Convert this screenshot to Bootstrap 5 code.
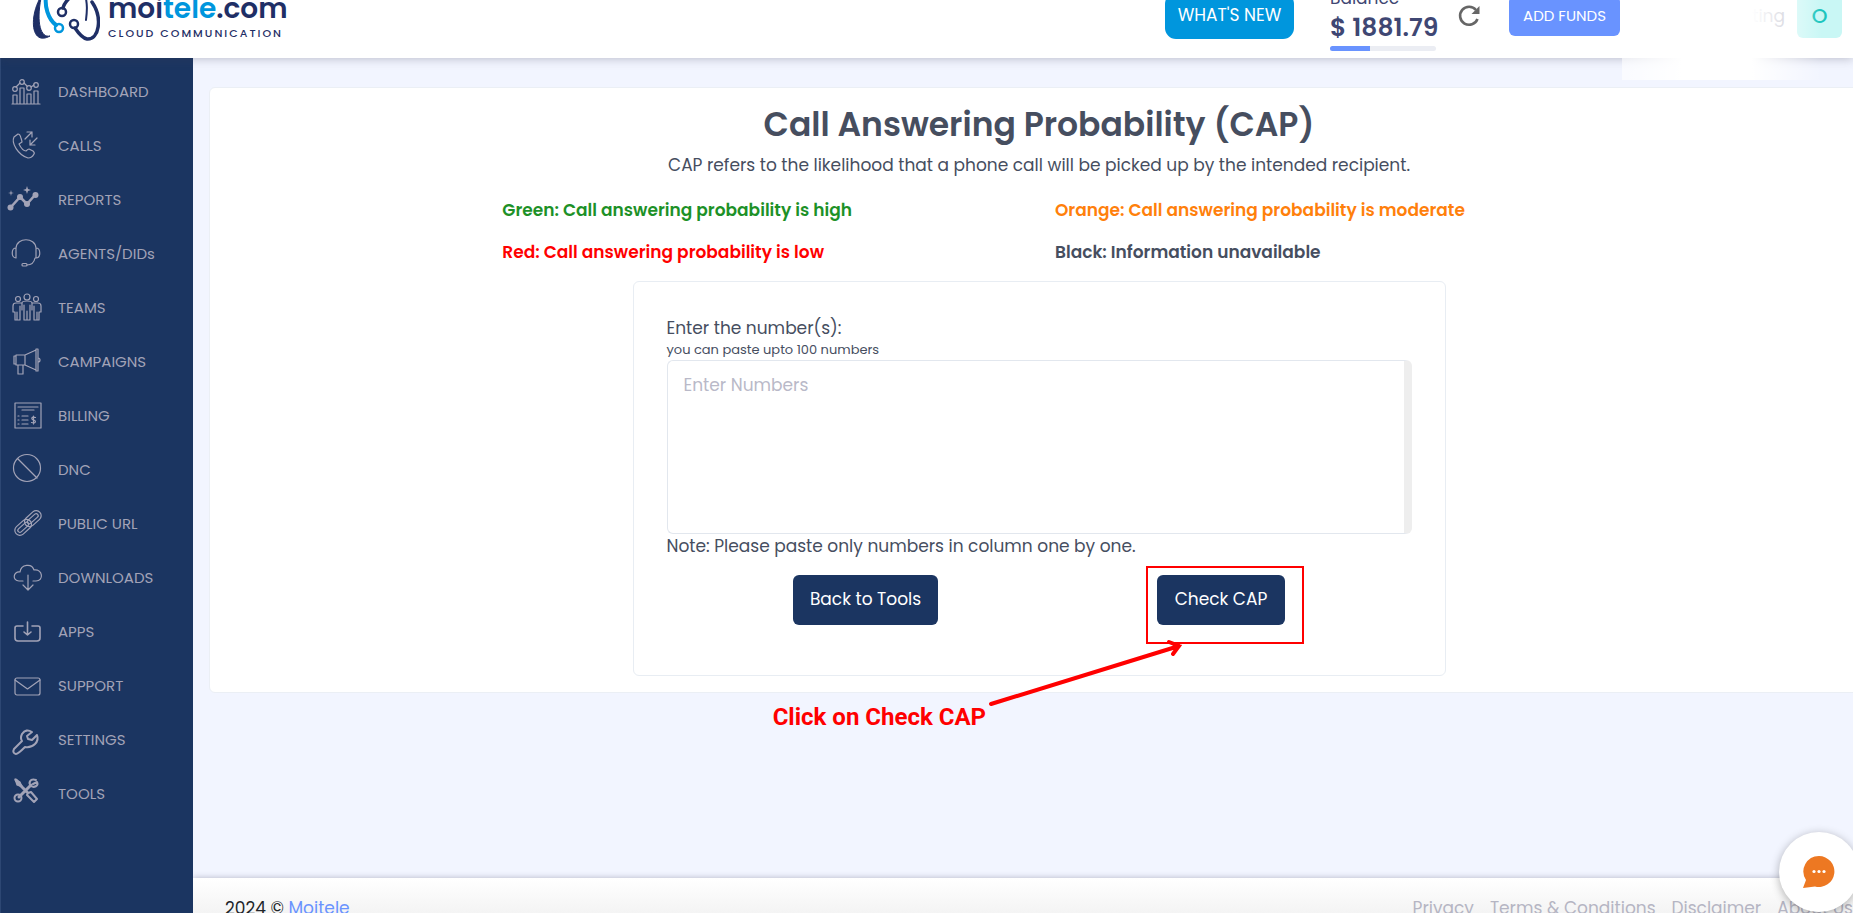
<!DOCTYPE html>
<html lang="en">
<head>
<meta charset="utf-8">
<meta name="viewport" content="width=device-width, initial-scale=1">
<title>Call Answering Probability</title>
<link href="https://cdn.jsdelivr.net/npm/bootstrap@5.3.0/dist/css/bootstrap.min.css" rel="stylesheet">
<style>
  body { font-family: Poppins, Inter, "Open Sans", sans-serif; font-size: 17px; line-height: 24px; color: #464e5f; background: #f2f5ff; }
  a { text-decoration: none; }
  .topbar { height: 58px; background: #fff; box-shadow: 0 0 10px rgba(60,60,80,.35); z-index: 5; }
  .topbar-inner { height: 84px; }
  .brand-link { padding-bottom: 14px; }
  .brand-name { font-size: 28px; line-height: 32px; font-weight: 600; color: #1f2f66; }
  .brand-name span { color: #0096dd; }
  .brand-sub { font-size: 11px; line-height: 16px; font-weight: 500; letter-spacing: 2px; color: #1f2f66; }
  .btn-news { width: 129px; height: 46px; border-radius: 11px; background: #0096dd; color: #fff; font-size: 17px; padding: 0; }
  .btn-funds { width: 111px; height: 40px; border-radius: 6px; background: #6993ff; color: #fff; font-size: 15px; padding: 0; }
  .balance { width: 106px; color: #3f4773; margin: 0 21px 0 36px; padding-top: 5px; }
  .balance .amount { font-size: 25px; line-height: 36px; font-weight: 600; white-space: nowrap; }
  .balance .progress { height: 5px; background: #ebedf3; }
  .balance .progress-bar { background: #6993ff; }
  .btn-refresh { margin-right: 28px; }
  .user-area { width: 233px; padding-right: 11px; }
  .user-haze { left: 2px; width: 200px; height: 80px; top: 0; z-index: 1; background: linear-gradient(90deg, rgba(255,255,255,.6), #fff 30%, #fff 65%, rgba(255,255,255,0)); }
  .haze-wrap { width: 233px; right: 0; top: 0; height: 80px; z-index: 6; pointer-events: none; }
  .user-name { color: #b5b5c3; }
  .avatar { width: 45px; height: 44px; border-radius: 6px; background: #c9f7f5; color: #1bc5bd; font-weight: 500; font-size: 20px; }
  .sidebar { width: 193px; background: #1b3561; padding-top: 7px; border-left: 1px solid #2d4773; }
  .sidebar a { height: 54px; padding-left: 9px; gap: 15px; color: #a2a3b7; font-size: 15px; }
  .sidebar svg { width: 33px; height: 33px; margin-bottom: 2px; fill: none; stroke: #a2a3b7; stroke-width: 1.2; stroke-linecap: round; stroke-linejoin: round; }
  .panel { border: 1px solid #ebeff5; border-radius: 6px; margin: 29px -16px 0 16px; padding: 17px 0 16px; }
  .panel h1 { font-size: 33px; line-height: 40px; font-weight: 600; margin-bottom: 8px; }
  .legend-row { margin: 21px 0 17px; row-gap: 18px; font-weight: 600; }
  .legend-row > div { padding: 0 16px; }
  .t-green { color: #1d9127; } .t-red { color: #f00; } .t-orange { color: #ff800b; }
  .form-holder { padding: 0 8px; }
  .cap-form { border: 1px solid #e8edf3; border-radius: 6px; padding: 34px 33px 50px; }
  .hint { font-size: 13px; line-height: 20px; }
  .numbers { height: 174px; border: 1px solid #e2e7ee; border-right: 8px solid #eee; border-radius: 6px; padding: 12px 16px; font-size: 17px; resize: none; }
  .numbers::placeholder { color: #b9b9c8; }
  .actions { margin-top: 17px; padding: 0 17px; }
  .btn-navy { height: 50px; border-radius: 6px; background: #1b3561; color: #fff; font-size: 17px; padding: 0; }
  .btn-back { width: 145px; }
  .btn-cap { width: 128px; }
  .target-box { left: -11px; top: -9px; width: 158px; height: 78px; border: 2px solid #f00; }
  .arrow { left: -170px; top: 62px; }
  .callout { right: 299px; top: 130px; font: 700 24px/24px Roboto, sans-serif; color: #f00; white-space: nowrap; }
  .page-foot { height: 35px; background: linear-gradient(#fff, #f4f4f4); box-shadow: 0 0 6px rgba(60,60,90,.35); padding: 18px 0 0 32px; }
  .page-foot nav { gap: 16px; }
  .page-foot nav a { color: #b5b5c3; }
  .home-link { color: #6993ff; }
  .chat { width: 80px; height: 80px; right: -6px; bottom: 1px; background: #fff; box-shadow: 0 2px 10px rgba(0,0,0,.3); z-index: 7; }
</style>
</head>
<body>
<div class="vh-100 d-flex flex-column overflow-hidden position-relative">
  <header class="topbar position-relative d-flex align-items-end flex-shrink-0">
    <div class="topbar-inner d-flex align-items-center w-100 flex-shrink-0">
      <a href="#" class="brand-link d-flex align-items-center me-auto ps-4" aria-label="moitele.com">
        <svg class="ms-2" width="68" height="66" viewBox="0 -24 68 66" fill="none" stroke-linecap="round">
          <path d="M7 0C-3 20 0 46 18 36C9 38 4 24 9-2Z" fill="#1f2f66" stroke="#1f2f66" stroke-width="1"/>
          <path d="M60 2C71 18 67 40 55 39C50 38 45 31 43 28" stroke="#1f2f66" stroke-width="3.5"/>
          <path d="M52-10C56 4 55 12 54 20" stroke="#1f2f66" stroke-width="2"/>
          <path d="M15-8C11 6 17 20 24 25" stroke="#0096dd" stroke-width="4"/>
          <circle cx="27" cy="28" r="4" stroke="#0096dd" stroke-width="2.500"/>
          <path d="M31 8C32 3 37-2 42-6" stroke="#1f2f66" stroke-width="3.500"/>
          <circle cx="30" cy="12" r="4" stroke="#1f2f66" stroke-width="2.500"/>
          <circle cx="42" cy="24" r="4" stroke="#1f2f66" stroke-width="2.500"/>
        </svg>
        <span class="ms-2 mt-3 d-flex flex-column">
          <span class="brand-name">moi<span>tele</span>.com</span>
          <span class="brand-sub">CLOUD COMMUNICATION</span>
        </span>
      </a>
      <button type="button" class="btn btn-news">WHAT'S NEW</button>
      <div class="balance">
        <div>Balance</div>
        <div class="amount">$ 1881.79</div>
        <div class="progress"><div class="progress-bar" style="width:38%"></div></div>
      </div>
      <button type="button" class="btn p-0 border-0 btn-refresh" aria-label="Refresh balance">
        <svg width="24" height="24" viewBox="0 0 24 24" fill="none" stroke="#666" stroke-width="2.600"><path d="M20.500 15A9 9 0 1 1 19 6"/><path d="M22.500 2V10H14.500Z" fill="#666" stroke="none"/></svg>
      </button>
      <button type="button" class="btn btn-funds">ADD FUNDS</button>
      <div class="user-area d-flex align-items-center justify-content-end">
        <span class="user-name me-2 pe-1">ting</span>
        <span class="avatar d-flex align-items-center justify-content-center">O</span>
      </div>
    </div>
  </header>
  <div class="haze-wrap position-absolute"><div class="user-haze position-absolute"></div></div>

  <div class="d-flex flex-grow-1 overflow-hidden">
    <nav class="sidebar flex-shrink-0 d-flex flex-column">
      <a href="#" class="d-flex align-items-center"><svg viewBox="0 0 33 33"><path d="M2 29H30M3 29V20H7V29M10 29V13H14V29M17 29V19H21V29M24 29V16H28V29M6 12L10 8M14 8L17 11M21 12L24 10"/><circle cx="5" cy="14" r="2.300"/><circle cx="12" cy="7" r="2.300"/><circle cx="19" cy="13" r="2.300"/><circle cx="26" cy="10" r="2.300"/></svg>DASHBOARD</a>
      <a href="#" class="d-flex align-items-center"><svg viewBox="0 0 33 33"><path d="M8 5L4 8C1 14 8 26 18 29C21 29 23 27 24 25Q25 24 23 22L19 20Q18 20 16 22C13 22 10 17 9 15L12 13Q12 12 11 9Q10 5 8 5ZM15 10L22 3M17 3H22V8M27 9L20 16M20 11V16H25"/></svg>CALLS</a>
      <a href="#" class="d-flex align-items-center"><svg viewBox="0 0 33 33" overflow="visible"><path d="M1 24L10 14L17 21L25 12" stroke-width="2.600"/><g fill="#a2a3b7" stroke="none"><circle cx="0.500" cy="24.500" r="3"/><circle cx="10" cy="14" r="3"/><circle cx="17" cy="21" r="3"/><circle cx="25.500" cy="12" r="3"/><path d="M17 3L18 6L21 7L18 8L17 11L16 8L13 7L16 6ZM1 7L1.600 9.400L4 10L1.600 10.600L1 13L.4 10.600L-2 10L.4 9.400Z"/></g></svg>REPORTS</a>
      <a href="#" class="d-flex align-items-center"><svg viewBox="0 0 33 33"><path d="M6 11C7 0 25 0 26 11M6 11V21C1 21 1 11 6 11ZM26 11V21C31 21 31 11 26 11ZM25 21C24 26 21 28 17 28"/><rect x="12" y="26.500" width="5" height="2.500" rx="1"/></svg>AGENTS/DIDs</a>
      <a href="#" class="d-flex align-items-center"><svg viewBox="0 0 33 33"><circle cx="17" cy="6" r="3"/><circle cx="8" cy="8" r="2.500"/><circle cx="26" cy="8" r="2.500"/><path d="M12 19V12Q12 10 17 10Q22 10 22 12V19M14 14V29H20V14M17 20V29M12 12H6Q3 12 3 15V21H5V29H10V15M22 12H28Q31 12 31 15V21H29V29H24V15M7 21V29M27 21V29"/></svg>TEAMS</a>
      <a href="#" class="d-flex align-items-center"><svg viewBox="0 0 33 33"><path d="M6 10H15V20H6ZM6 11H4V19H6M15 10L26 5V25L15 20M26 4H28V26H26ZM28 13Q30 13 30 15T28 17M8 20V29H13V20"/></svg>CAMPAIGNS</a>
      <a href="#" class="d-flex align-items-center"><svg viewBox="0 0 33 33"><path d="M5 4H31V29H5ZM8 8H28M12 11H24M12 17H18M12 21H18M12 25H18M8 17H9M8 21H9M8 25H9M25.500 18.500C21 17 21 20.500 23.500 21C26.500 21.500 26 25 21.500 23.500M23.500 17V25"/></svg>BILLING</a>
      <a href="#" class="d-flex align-items-center"><svg viewBox="0 0 33 33"><circle cx="17" cy="15" r="13.500"/><path d="M8 6L27 25"/></svg>DNC</a>
      <a href="#" class="d-flex align-items-center"><svg viewBox="0 0 33 33"><g transform="rotate(-42 18 16)"><rect x="2" y="11" width="19" height="10" rx="5"/><rect x="5" y="14" width="13" height="4" rx="2"/><rect x="15" y="11" width="19" height="10" rx="5"/><rect x="18" y="14" width="13" height="4" rx="2"/></g></svg>PUBLIC URL</a>
      <a href="#" class="d-flex align-items-center"><svg viewBox="0 0 33 33"><path d="M13 20H9C2 20 3 10 10 11C11 3 22 2 24 9C33 8 34 20 26 20H23M18 14V29M13 24L18 29L23 24"/></svg>DOWNLOADS</a>
      <a href="#" class="d-flex align-items-center"><svg viewBox="0 0 33 33"><path d="M13 11H7Q5 11 5 13V23Q5 26 8 26H27Q30 26 30 23V13Q30 11 28 11H22M17.500 7V20M14 17L17.500 20L21 17" stroke-width="1.600"/></svg>APPS</a>
      <a href="#" class="d-flex align-items-center"><svg viewBox="0 0 33 33"><rect x="5" y="9" width="25" height="17" rx="2"/><path d="M5 11L17.500 20L30 11"/></svg>SUPPORT</a>
      <a href="#" class="d-flex align-items-center"><svg viewBox="0 0 33 33"><path d="M22 9Q16 5 12 11Q10 15 12 18L4 26Q2 30 6 31Q8 31 15 24Q21 25 25 21Q29 17 27 12L22 17L18 16L17 13Z" stroke-width="2"/></svg>SETTINGS</a>
      <a href="#" class="d-flex align-items-center"><svg viewBox="0 0 33 33"><path d="M6 3L12 10L17 15M9 20L21 8" stroke-width="3"/><path d="M5 2L10 5L12 10L7 8Z" fill="#a2a3b7"/><circle cx="8" cy="21" r="3.500" stroke-width="2"/><path d="M26 3C20 1 18 6 21 9C24 11 29 9 27 5L23 7" stroke-width="2"/><path d="M18 16L21 15L27 22L24 25L17 18Z" stroke-width="2"/></svg>TOOLS</a>
    </nav>

    <div class="flex-grow-1 d-flex flex-column overflow-hidden">
      <main class="flex-grow-1">
        <section class="panel bg-white">
          <h1 class="text-center">Call Answering Probability (CAP)</h1>
          <p class="text-center mb-0">CAP refers to the likelihood that a phone call will be picked up by the intended recipient.</p>
          <div class="row g-0 legend-row">
            <div class="col-4 offset-2 t-green">Green: Call answering probability is high</div>
            <div class="col-4 t-orange">Orange: Call answering probability is moderate</div>
            <div class="col-4 offset-2 t-red">Red: Call answering probability is low</div>
            <div class="col-4">Black: Information unavailable</div>
          </div>
          <div class="row g-0">
            <div class="col-6 offset-3 form-holder">
              <form class="cap-form">
                <label for="numbers" class="d-block">Enter the number(s):</label>
                <div class="hint" id="hint">you can paste upto 100 numbers</div>
                <textarea id="numbers" class="form-control numbers" placeholder="Enter Numbers" aria-describedby="hint"></textarea>
                <div>Note: Please paste only numbers in column one by one.</div>
                <div class="actions d-flex justify-content-around">
                  <button type="button" class="btn btn-navy btn-back">Back to Tools</button>
                  <div class="position-relative">
                    <button type="button" class="btn btn-navy btn-cap">Check CAP</button>
                    <div class="target-box position-absolute pe-none"></div>
                    <svg class="arrow position-absolute pe-none" width="198" height="72" viewBox="-170 62 198 72" fill="none" stroke="#f00" stroke-width="4" stroke-linecap="round"><path d="M-166 129L22 71M12 67L22 71L16 79"/></svg>
                    <div class="callout position-absolute">Click on Check CAP</div>
                  </div>
                </div>
              </form>
            </div>
          </div>
        </section>
      </main>
      <footer class="page-foot d-flex justify-content-between">
        <div class="text-dark">2024 © <a href="#" class="home-link">Moitele</a></div>
        <nav class="d-flex"><a href="#">Privacy</a><a href="#">Terms &amp; Conditions</a><a href="#">Disclaimer</a><a href="#">About Us</a></nav>
      </footer>
    </div>
  </div>
  <button type="button" class="chat btn p-0 border-0 rounded-circle position-absolute" aria-label="Open chat">
    <svg width="32" height="32" viewBox="0 0 32 32"><path d="M16 0A15.500 15.500 0 1 1 12 30.500L0 32L3 24A15.500 15.500 0 0 1 16 0Z" fill="#ed7822"/><g fill="#fff"><circle cx="11" cy="15.500" r="1.600"/><circle cx="16" cy="15.500" r="1.600"/><circle cx="21" cy="15.500" r="1.600"/></g></svg>
  </button>
</div>
<script src="https://cdn.jsdelivr.net/npm/bootstrap@5.3.0/dist/js/bootstrap.bundle.min.js"></script>
</body>
</html>
